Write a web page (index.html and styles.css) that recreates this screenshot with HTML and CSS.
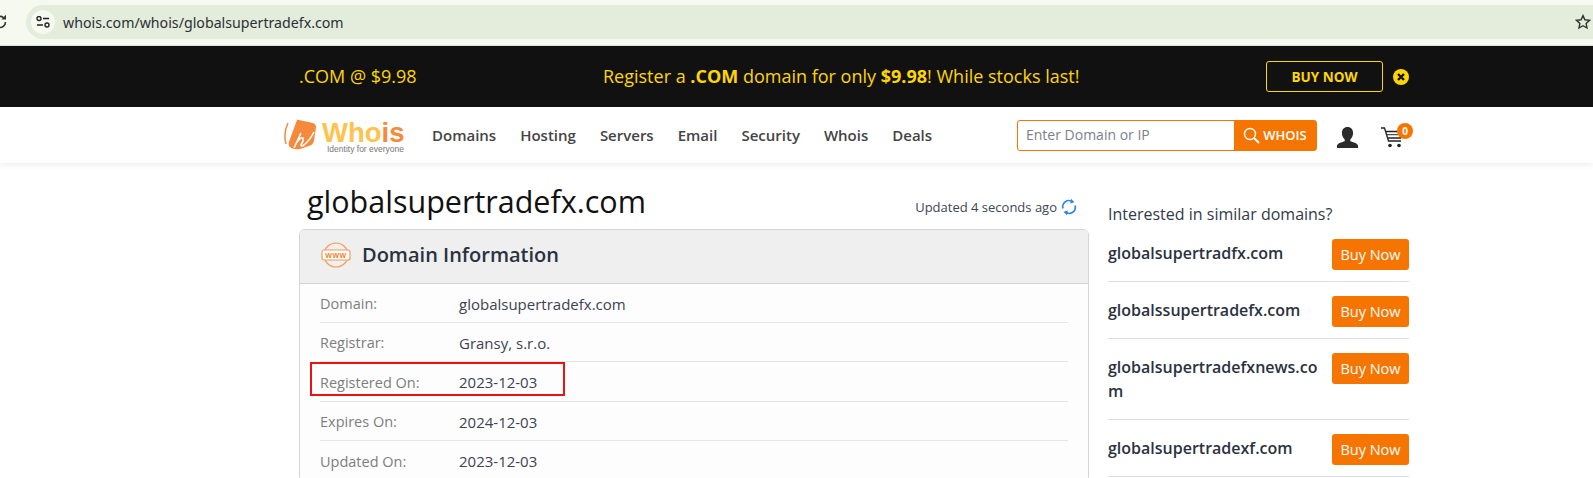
FILE: index.html
```html
<!DOCTYPE html>
<html lang="en">
<head>
  <meta charset="UTF-8" />
  <title>whois.com/whois/globalsupertradefx.com</title>
  <link rel="stylesheet" href="styles.css">
</head>
<body>

  <div class="browser-bar">
    <svg class="reload" width="14" height="16" viewBox="0 0 14 16"><path d="M12.500 8a5.500 5.500 0 1 1-2-4.300" fill="none" stroke="#333" stroke-width="1.600"/><path d="M13 .8v4.700H8.300z" fill="#333"/></svg>
    <div class="url-pill">
      <span class="tune-icon">
        <svg width="14" height="12" viewBox="0 0 14 12"><circle cx="3" cy="2.500" r="2" fill="none" stroke="#222" stroke-width="1.400"/><path d="M7 2.500h6M1 9h6" stroke="#222" stroke-width="1.600"/><circle cx="11" cy="9" r="2" fill="none" stroke="#222" stroke-width="1.400"/></svg>
      </span>
      <span class="url-text">whois.com/whois/globalsupertradefx.com</span>
      <svg class="star" width="16" height="16" viewBox="0 0 16 16"><path d="M8 1.600l1.900 4.200 4.600.5-3.400 3.100.9 4.600L8 11.700 4 14l.9-4.600L1.500 6.300l4.600-.5z" fill="none" stroke="#333" stroke-width="1.400"/></svg>
    </div>
  </div>

  <div class="promo">
    <span class="promo-price">.COM @ $9.98</span>
    <span class="promo-text">Register a <b>.COM</b> domain for only <b>$9.98</b>! While stocks last!</span>
    <a class="promo-buy">BUY NOW</a>
    <svg class="promo-close" width="16" height="16" viewBox="0 0 16 16"><circle cx="8" cy="8" r="8" fill="#ffd600"/><path d="M5 5l6 6M11 5l-6 6" stroke="#111" stroke-width="2.400"/></svg>
  </div>

  <div class="nav">
    <div class="logo">
      <svg width="36" height="34" viewBox="0 0 36 34">
        <path d="M5 5Q0 15 3 26" fill="none" stroke="#f58a3c" stroke-width="1.500"/>
        <path d="M14 2Q13 1 16 2L30 5Q33 6 33 9L31 23Q30 27 26 28L17 31Q9 32 6 28Q5 26 7 21z" fill="#f58a3c"/>
        <path d="M18 15L11 30M14 24Q18 19 20 20Q21 22 18 27Q18 29 21 27Q27 22 31 14" fill="none" stroke="#fff" stroke-width="1.600"/>
      </svg>
      <div class="logo-words">
        <span class="logo-name">Who<i>is</i></span>
        <span class="logo-tag">Identity for everyone</span>
      </div>
    </div>
    <ul class="nav-links">
      <li>Domains</li>
      <li>Hosting</li>
      <li>Servers</li>
      <li>Email</li>
      <li>Security</li>
      <li>Whois</li>
      <li>Deals</li>
    </ul>
    <div class="search">
      <span class="search-input">Enter Domain or IP</span>
      <span class="search-btn">
        <svg width="17" height="17" viewBox="0 0 17 17"><circle cx="7" cy="7" r="5.500" fill="none" stroke="#fff" stroke-width="1.400"/><path d="M11 11l5 5" stroke="#fff" stroke-width="2"/></svg>
        WHOIS
      </span>
    </div>
    <svg class="user-icon" width="21" height="21" viewBox="0 0 21 21"><path d="M10.500 0c3.600 0 5.600 2.600 5.600 6 0 2.800-1.300 5-2.800 6.400v1.800c2.800 1 7 1.800 7.700 4.300v2.500H0v-2.500c.7-2.500 4.900-3.300 7.700-4.300v-1.800C6.200 11 4.900 8.800 4.900 6c0-3.400 2-6 5.600-6z" fill="#2b2b2b"/></svg>
    <div class="cart">
      <svg width="23" height="21" viewBox="0 0 23 21"><path d="M0 1h3.500l4 13h12.500M5 4.500h17l-2.500 6.500H6.500" fill="none" stroke="#222" stroke-width="1.300"/><path d="M6 7.700h15" stroke="#222"/><circle cx="9" cy="18.500" r="1.800" fill="#222"/><circle cx="18" cy="18.500" r="1.800" fill="#222"/></svg>
      <span class="cart-count">0</span>
    </div>
  </div>

  <div class="page">
    <div class="main-col">
      <div class="title-row">
        <h1>globalsupertradefx.com</h1>
        <div class="updated">
          Updated 4 seconds ago
          <svg width="16" height="18" viewBox="0 0 16 18"><path d="M2 10.500A6 6 0 0 1 11.500 4M14 7.500A6 6 0 0 1 4.500 14" fill="none" stroke="#2f86e0" stroke-width="1.700"/><path d="M10 .8l3.500 3.500-4.300 1.200zM6 17.200l-3.500-3.500 4.300-1.200z" fill="#2f86e0"/></svg>
        </div>
      </div>

      <div class="card">
        <div class="card-head">
          <svg width="30" height="26" viewBox="0 0 30 26">
            <circle cx="15" cy="13" r="12" fill="none" stroke="#f79a55" stroke-width="1.200"/>
            <rect x="1" y="8" width="28" height="10" rx="2" fill="#fff" stroke="#f79a55" stroke-width="1.200"/>
            <text x="15" y="16" text-anchor="middle" class="www">WWW</text>
          </svg>
          <h2>Domain Information</h2>
        </div>
        <div class="card-body">
          <div class="info-row"><span class="info-label">Domain:</span><span>globalsupertradefx.com</span></div>
          <div class="info-row"><span class="info-label">Registrar:</span><span>Gransy, s.r.o.</span></div>
          <div class="info-row"><span class="info-label">Registered On:</span><span>2023-12-03</span></div>
          <div class="info-row"><span class="info-label">Expires On:</span><span>2024-12-03</span></div>
          <div class="info-row"><span class="info-label">Updated On:</span><span>2023-12-03</span></div>
        </div>
        <div class="highlight"></div>
      </div>
    </div>

    <div class="side-col">
      <h3>Interested in similar domains?</h3>
      <div class="side-row"><span class="side-name">globalsupertradfx.com</span><a class="side-buy">Buy Now</a></div>
      <div class="side-row"><span class="side-name">globalssupertradefx.com</span><a class="side-buy">Buy Now</a></div>
      <div class="side-row"><span class="side-name">globalsupertradefxnews.com</span><a class="side-buy">Buy Now</a></div>
      <div class="side-row"><span class="side-name">globalsupertradexf.com</span><a class="side-buy">Buy Now</a></div>
    </div>
  </div>

</body>
</html>
```

FILE: styles.css
```css
* {
  box-sizing: border-box;
  margin: 0;
  padding: 0;
}

html, body {
  height: 478px;
  overflow: hidden;
}

body {
  font-family: "Open Sans", sans-serif;
  background-color: #fff;
  color: #333;
}

/* browser chrome */
.browser-bar {
  height: 46px;
  background-color: #f6f9f0;
  border-bottom: 1px solid #dfe3d8;
  padding: 5px 0 0 0;
  display: flex;
}

.reload {
  margin: 9px 0 0 -7px;
}

.url-pill {
  flex: 1;
  height: 34px;
  margin-left: 19px;
  background-color: #e4ecdb;
  border-radius: 17px 0 0 17px;
  display: flex;
  align-items: center;
  padding: 0 2px 0 5px;
}

.tune-icon {
  width: 24px;
  height: 24px;
  border-radius: 50%;
  background-color: #f6f9f0;
  display: flex;
  align-items: center;
  justify-content: center;
}

.url-text {
  flex: 1;
  margin-left: 8px;
  font-family: "Noto Sans", sans-serif;
  font-size: 14.2px;
  color: #2b3038;
}

/* promo strip */
.promo {
  height: 61px;
  background-color: #111;
  color: #ffd600;
  font-size: 18px;
  display: flex;
  align-items: center;
  padding-left: 299px;
}

.promo-price {
  width: 304px;
  padding-bottom: 2px;
}

.promo-text {
  width: 663px;
  padding-bottom: 2px;
}

.promo-buy {
  width: 117px;
  height: 31px;
  border: 1px solid #ffd600;
  border-radius: 3px;
  font-size: 13.5px;
  font-weight: 700;
  display: flex;
  align-items: center;
  justify-content: center;
}

.promo-close {
  margin-left: 10px;
}

/* main nav */
.nav {
  height: 56px;
  background-color: #fff;
  box-shadow: 0 2px 6px rgba(0, 0, 0, 0.07);
  display: flex;
  align-items: center;
  padding-left: 283px;
}

.logo {
  width: 149px;
  display: flex;
  align-items: center;
}

.logo-words {
  display: flex;
  flex-direction: column;
  margin-left: 3px;
  padding-top: 3px;
}

.logo-name {
  font-family: "Liberation Sans", sans-serif;
  font-size: 27.5px;
  font-weight: 700;
  line-height: 24px;
  color: #fec34d;
}

.logo-name i {
  font-style: normal;
  color: #f58a3c;
}

.logo-tag {
  font-family: "Liberation Sans", sans-serif;
  font-size: 8.5px;
  line-height: 8px;
  color: #777;
  margin-left: 5px;
  white-space: nowrap;
}

.nav-links {
  list-style: none;
  display: flex;
  gap: 24px;
  width: 585px;
  font-size: 15px;
  font-weight: 600;
  color: #444;
}

.search {
  width: 300px;
  height: 31px;
  border: 1px solid #f57500;
  border-radius: 3px;
  display: flex;
  font-size: 14px;
}

.search-input {
  flex: 1;
  padding-left: 8px;
  line-height: 28px;
  color: #7b818a;
}

.search-btn {
  width: 82px;
  background-color: #f57500;
  color: #fff;
  font-size: 13px;
  font-weight: 600;
  display: flex;
  align-items: center;
  justify-content: center;
  gap: 3px;
}

.user-icon {
  margin: 4px 0 0 20px;
}

.cart {
  margin: 6px 0 0 23px;
  position: relative;
  height: 23px;
}

.cart-count {
  position: absolute;
  top: -4px;
  left: 16px;
  width: 16px;
  height: 16px;
  border-radius: 50%;
  background-color: #f57500;
  color: #fff;
  font-size: 10px;
  font-weight: 700;
  text-align: center;
  line-height: 16px;
}

/* content */
.page {
  display: flex;
  padding: 0 0 0 299px;
}

.main-col {
  width: 790px;
}

.title-row {
  height: 66px;
  display: flex;
  align-items: center;
  justify-content: space-between;
  padding: 9px 12px 0 8px;
}

h1 {
  font-size: 30.5px;
  font-weight: 400;
  color: #111;
}

.updated {
  display: flex;
  align-items: center;
  gap: 4px;
  font-size: 13px;
  color: #3c4655;
  padding-top: 13px;
}

.card {
  border: 1px solid #d4d4d4;
  border-radius: 6px 6px 0 0;
  position: relative;
  height: 249px;
}

.card-head {
  height: 54px;
  background-color: #efefef;
  border-bottom: 1px solid #d4d4d4;
  border-radius: 6px 6px 0 0;
  display: flex;
  align-items: center;
  padding: 0 0 4px 21px;
  gap: 11px;
}

.www {
  font-family: "Liberation Sans", sans-serif;
  font-size: 7px;
  font-weight: 700;
  letter-spacing: 0.5px;
  fill: #f07f2a;
}

h2 {
  font-size: 20px;
  font-weight: 600;
  color: #2a3240;
}

.card-body {
  padding: 0 20px;
  background-color: #fdfdfd;
}

.info-row {
  height: 39.5px;
  padding-top: 2px;
  display: flex;
  align-items: center;
  border-bottom: 1px solid #e6e6e6;
  font-size: 15px;
  color: #3c4350;
}

.info-row:first-child {
  height: 38.5px;
}

.info-label {
  width: 139px;
  font-size: 14.5px;
  color: #7d7d7d;
}

/* the red box someone drew on the screenshot */
.highlight {
  position: absolute;
  left: 10px;
  top: 132px;
  width: 255px;
  height: 34px;
  border: 2px solid #ee1111;
}

.side-col {
  width: 301px;
  margin-left: 19px;
}

h3 {
  font-size: 16px;
  font-weight: 400;
  color: #333b47;
  padding-top: 40px;
  margin-bottom: 14px;
}

.side-row {
  display: flex;
  align-items: flex-start;
  justify-content: space-between;
  gap: 10px;
  padding: 0 0 11px 0;
  margin-bottom: 14px;
  border-bottom: 1px solid #ddd;
}

.side-name {
  flex: 1;
  font-size: 16px;
  font-weight: 600;
  line-height: 24px;
  color: #2a3240;
  word-break: break-all;
  padding: 2px 0 5px;
}

.side-buy {
  width: 77px;
  height: 31px;
  background-color: #f57500;
  color: #fff;
  border-radius: 3px;
  font-size: 14.5px;
  font-weight: 500;
  line-height: 31px;
  text-align: center;
}
```
